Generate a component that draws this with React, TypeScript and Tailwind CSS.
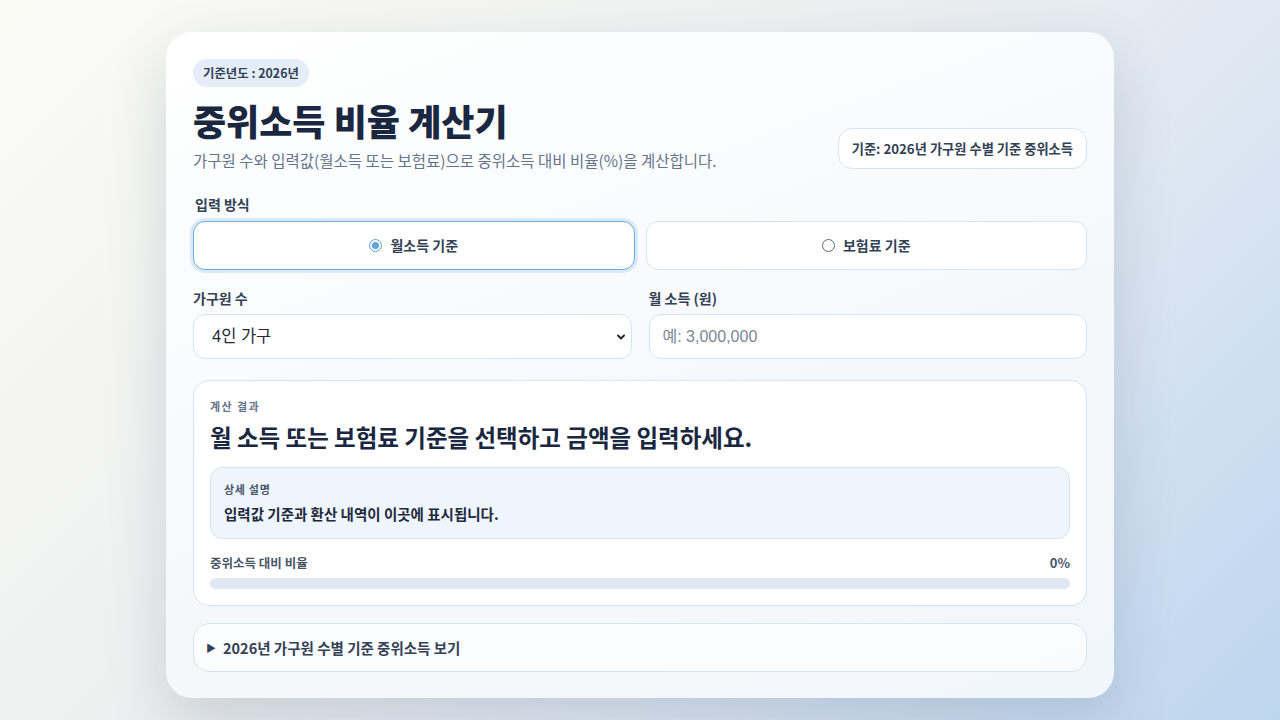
import { useState } from 'react';

const FONT = '[font-family:"Noto_Sans_CJK_KR","Noto_Sans",sans-serif]';
const FIELD_FONT = '[font-family:"Liberation_Sans","Noto_Sans_CJK_KR",sans-serif]';

export default function App() {
  const [mode, setMode] = useState<'income' | 'premium'>('income');
  const [members, setMembers] = useState('4');
  const [amount, setAmount] = useState('');

  return (
    <div
      className={`${FONT} flex min-h-screen justify-center bg-[linear-gradient(135deg,#fbfbf6_0%,#eef0f0_40%,#dfe8f2_65%,#bdd5ee_100%)] pt-[32px] text-[#1e293b]`}
    >
      <div className="flex h-[666px] w-[948px] flex-col rounded-[26px] bg-[linear-gradient(160deg,#ffffff_0%,#f5f8fb_60%,#f1f6fa_100%)] px-[27px] pt-[27px] shadow-[0_24px_60px_rgba(30,50,80,0.16)]">
        {/* Header */}
        <div className="flex items-start justify-between">
          <div className="flex flex-col items-start">
            <span className="rounded-full bg-[#e5eef8] px-[10px] py-[5px] text-[12.4px] leading-[18px] font-bold text-[#334155]">
              기준년도 : 2026년
            </span>
            <h1 className="mt-[10px] text-[36px] leading-[46px] font-extrabold text-[#1a2740]">
              중위소득 비율 계산기
            </h1>
            <p className="mt-[6px] text-[15.5px] leading-[22px] text-[#64748b]">
              가구원 수와 입력값(월소득 또는 보험료)으로 중위소득 대비 비율(%)을 계산합니다.
            </p>
          </div>
          <div className="mt-[69px] rounded-[14px] border border-[#d6e4f2] bg-white px-[13px] py-[10px] text-[13.25px] leading-[19px] font-bold text-[#334155]">
            기준: 2026년 가구원 수별 기준 중위소득
          </div>
        </div>

        {/* Input mode */}
        <div className="mt-[23px] pl-[2px] text-[14px] leading-[20px] font-bold text-[#334155]">입력 방식</div>
        <div className="mt-[7px] grid grid-cols-2 gap-[11px]">
          {(
            [
              ['income', '월소득 기준'],
              ['premium', '보험료 기준'],
            ] as const
          ).map(([key, label]) => {
            const active = mode === key;
            return (
              <button
                key={key}
                type="button"
                onClick={() => setMode(key)}
                className={`flex h-[49px] items-center justify-center gap-[8px] rounded-[12px] border bg-white text-[14px] font-bold text-[#334155] ${
                  active
                    ? 'border-[#6aaee0] shadow-[0_0_0_3px_#dce9f6]'
                    : 'border-[#d6e4f2]'
                }`}
              >
                <span
                  className={`flex h-[13px] w-[13px] items-center justify-center rounded-full border ${
                    active ? 'border-[#5a9fd6]' : 'border-[#5b6675]'
                  } bg-white`}
                >
                  {active && <span className="h-[7px] w-[7px] rounded-full bg-[#5ea5dc]" />}
                </span>
                {label}
              </button>
            );
          })}
        </div>

        {/* Fields */}
        <div className="mt-[18px] grid grid-cols-2 gap-[17px]">
          <label className="flex flex-col">
            <span className="text-[14px] leading-[20px] font-bold text-[#334155]">가구원 수</span>
            <div className="relative mt-[6px]">
              <select
                value={members}
                onChange={(e) => setMembers(e.target.value)}
                className={`${FIELD_FONT} h-[45px] w-full appearance-none rounded-[12px] border border-[#d6e4f2] bg-white pl-[18px] text-[16.5px] text-[#1e293b] outline-none`}
              >
                {[1, 2, 3, 4, 5, 6, 7].map((n) => (
                  <option key={n} value={n}>
                    {n}인 가구
                  </option>
                ))}
              </select>
              <svg
                className="pointer-events-none absolute top-1/2 right-[6px] -translate-y-1/2"
                width="10"
                height="10"
                viewBox="0 0 10 10"
                fill="none"
                stroke="#1e293b"
                strokeWidth="2"
                strokeLinecap="round"
                strokeLinejoin="round"
                aria-hidden
              >
                <path d="M2 3.5l3 3 3-3" />
              </svg>
            </div>
          </label>
          <label className="flex flex-col">
            <span className="text-[14px] leading-[20px] font-bold text-[#334155]">월 소득 (원)</span>
            <input
              value={amount}
              onChange={(e) => setAmount(e.target.value)}
              placeholder="예: 3,000,000"
              className={`${FIELD_FONT} mt-[6px] h-[45px] w-full rounded-[12px] border border-[#d6e4f2] bg-white px-[13px] text-[16px] text-[#1e293b] outline-none placeholder:text-[#7c8794]`}
            />
          </label>
        </div>

        {/* Result */}
        <div className="mt-[21px] rounded-[16px] border border-[#d6e4f2] bg-white px-[16px] pt-[17px] pb-[16px]">
          <div className="text-[11px] leading-[16px] font-bold tracking-[1.4px] text-[#64748b]">계산 결과</div>
          <div className="mt-[7px] text-[23.5px] leading-[33px] font-bold text-[#1a2740]">
            월 소득 또는 보험료 기준을 선택하고 금액을 입력하세요.
          </div>
          <div className="mt-[13px] rounded-[12px] border border-[#d6e4f2] bg-[#eef5fc] px-[13px] pt-[13px] pb-[13px]">
            <div className="text-[11px] leading-[16px] font-bold tracking-[0.7px] text-[#475569]">상세 설명</div>
            <div className="mt-[6px] text-[14.5px] leading-[22px] font-semibold text-[#1e293b]">
              입력값 기준과 환산 내역이 이곳에 표시됩니다.
            </div>
          </div>
          <div className="mt-[15px] flex items-center justify-between text-[12.5px] leading-[18px] font-bold text-[#475569]">
            <span>중위소득 대비 비율</span>
            <span className="text-[13px]">0%</span>
          </div>
          <div className="mt-[6px] h-[11px] w-full overflow-hidden rounded-full bg-[#e0e9f3]">
            <div className="h-full rounded-full bg-[#5ea5dc]" style={{ width: '0%' }} />
          </div>
        </div>

        {/* Details */}
        <details className="mt-[17px] rounded-[16px] border border-[#d6e4f2] bg-white/60">
          <summary className="flex h-[47px] cursor-pointer list-none items-center gap-[7px] px-[12px] text-[14.5px] font-bold text-[#334155]">
            <span className="text-[10px] text-[#334155]">▶</span>
            2026년 가구원 수별 기준 중위소득 보기
          </summary>
        </details>
      </div>
    </div>
  );
}
